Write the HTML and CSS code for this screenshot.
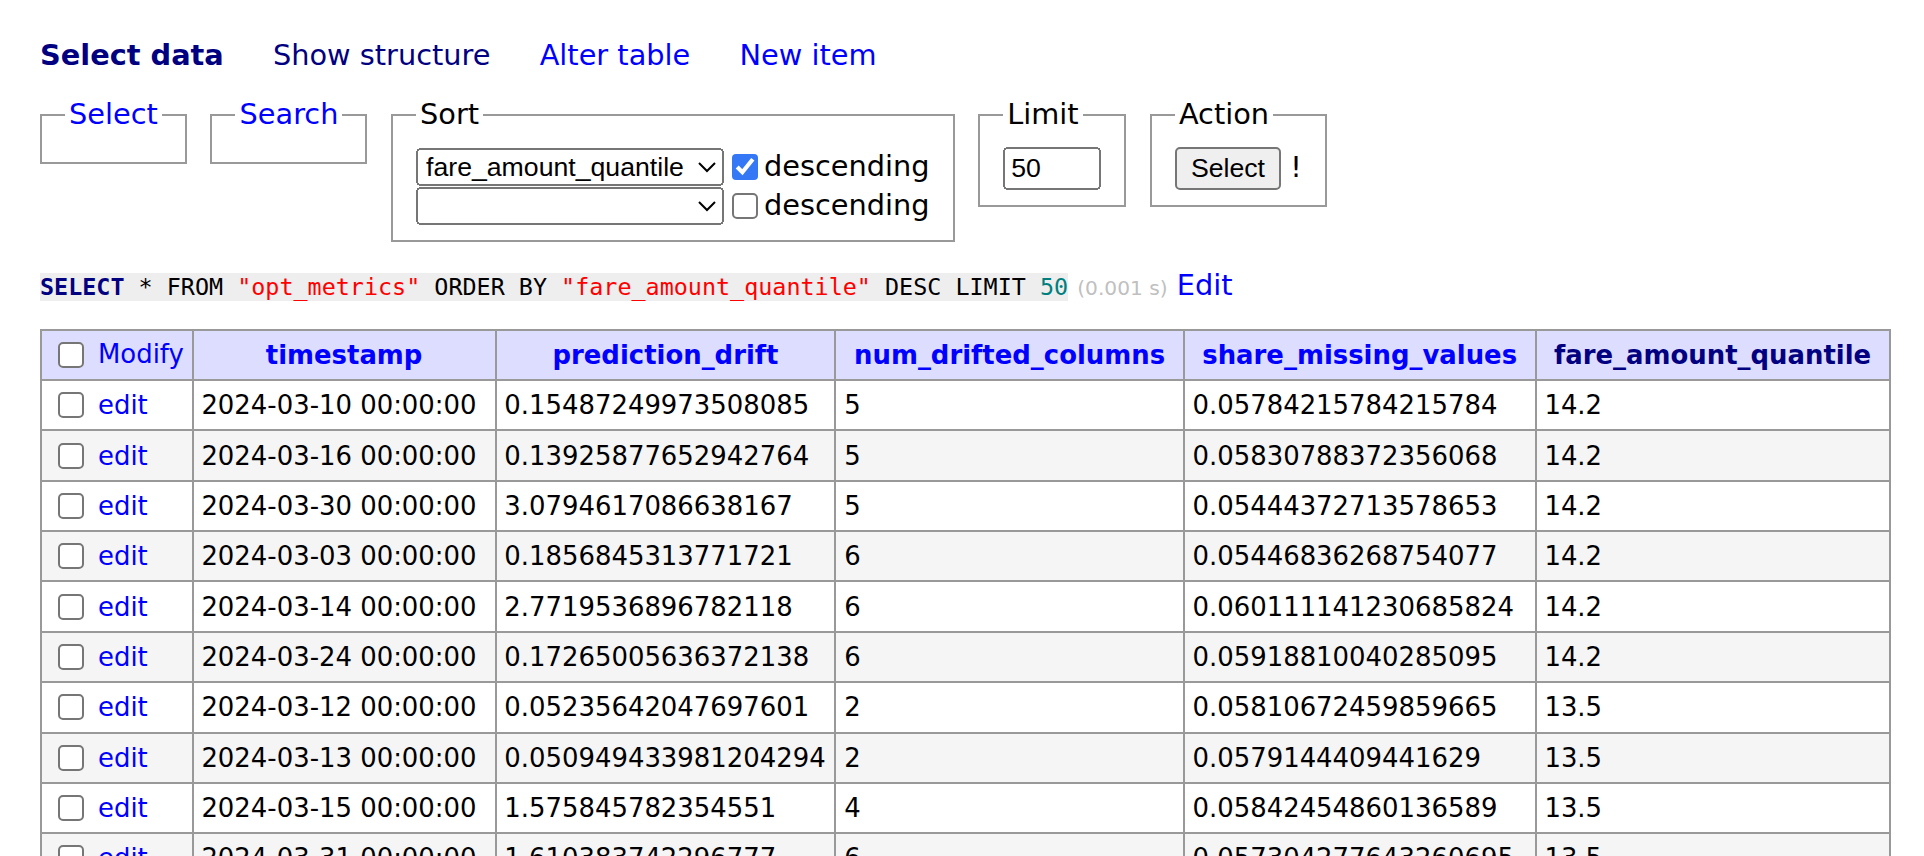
FILE: index.html
```html
<!DOCTYPE html>
<html lang="en">
<head>
<meta charset="utf-8">
<title>Select: opt_metrics - Adminer</title>
<link rel="stylesheet" href="styles.css">
</head>
<body>
<div class="content">
<p class="links"><a href="#select-data" class="active visited">Select data</a> <a href="#show-structure" class="visited">Show structure</a> <a href="#alter-table">Alter table</a> <a href="#new-item">New item</a></p>
<form class="form" action="#">
<fieldset class="box"><legend class="legend"><a href="#fieldset-select">Select</a></legend></fieldset>
<fieldset class="box"><legend class="legend"><a href="#fieldset-search">Search</a></legend></fieldset>
<fieldset class="box"><legend class="legend">Sort</legend>
<div class="sort-row"><select class="sort-select"><option>fare_amount_quantile</option><option></option></select><label class="desc"><input type="checkbox" class="check" checked>descending</label></div>
<div class="sort-row"><select class="sort-select"><option></option><option>fare_amount_quantile</option></select><label class="desc"><input type="checkbox" class="check">descending</label></div>
</fieldset>
<fieldset class="box"><legend class="legend">Limit</legend><div><input type="text" class="size" value="50"></div></fieldset>
<fieldset class="box"><legend class="legend">Action</legend><div><input type="submit" class="button" value="Select"> <span class="noindex" title="Full table scan">!</span></div></fieldset>
</form>
<p class="query"><code class="sql"><span class="kw">SELECT</span> * FROM <span class="str">"opt_metrics"</span> ORDER BY <span class="str">"fare_amount_quantile"</span> DESC LIMIT <span class="num">50</span></code> <span class="time">(0.001 s)</span> <a href="#edit">Edit</a></p>
<table class="data">
<thead>
<tr><td class="cell"><input type="checkbox" class="check"> <a href="#modify">Modify</a></td><th class="head w-ts"><a href="#c1">timestamp</a></th><th class="head w-pd"><a href="#c2">prediction_drift</a></th><th class="head w-nd"><a href="#c3">num_drifted_columns</a></th><th class="head w-sm"><a href="#c4">share_missing_values</a></th><th class="head w-fa"><a href="#c5" class="visited">fare_amount_quantile</a></th></tr>
</thead>
<tbody>
<tr><td class="cell"><input type="checkbox" class="check"> <a href="#e1">edit</a></td><td class="cell">2024-03-10 00:00:00</td><td class="cell">0.15487249973508085</td><td class="cell">5</td><td class="cell">0.05784215784215784</td><td class="cell">14.2</td></tr>
<tr><td class="cell"><input type="checkbox" class="check"> <a href="#e2">edit</a></td><td class="cell">2024-03-16 00:00:00</td><td class="cell">0.13925877652942764</td><td class="cell">5</td><td class="cell">0.05830788372356068</td><td class="cell">14.2</td></tr>
<tr><td class="cell"><input type="checkbox" class="check"> <a href="#e3">edit</a></td><td class="cell">2024-03-30 00:00:00</td><td class="cell">3.0794617086638167</td><td class="cell">5</td><td class="cell">0.05444372713578653</td><td class="cell">14.2</td></tr>
<tr><td class="cell"><input type="checkbox" class="check"> <a href="#e4">edit</a></td><td class="cell">2024-03-03 00:00:00</td><td class="cell">0.1856845313771721</td><td class="cell">6</td><td class="cell">0.05446836268754077</td><td class="cell">14.2</td></tr>
<tr><td class="cell"><input type="checkbox" class="check"> <a href="#e5">edit</a></td><td class="cell">2024-03-14 00:00:00</td><td class="cell">2.7719536896782118</td><td class="cell">6</td><td class="cell">0.060111141230685824</td><td class="cell">14.2</td></tr>
<tr><td class="cell"><input type="checkbox" class="check"> <a href="#e6">edit</a></td><td class="cell">2024-03-24 00:00:00</td><td class="cell">0.17265005636372138</td><td class="cell">6</td><td class="cell">0.05918810040285095</td><td class="cell">14.2</td></tr>
<tr><td class="cell"><input type="checkbox" class="check"> <a href="#e7">edit</a></td><td class="cell">2024-03-12 00:00:00</td><td class="cell">0.05235642047697601</td><td class="cell">2</td><td class="cell">0.05810672459859665</td><td class="cell">13.5</td></tr>
<tr><td class="cell"><input type="checkbox" class="check"> <a href="#e8">edit</a></td><td class="cell">2024-03-13 00:00:00</td><td class="cell">0.050949433981204294</td><td class="cell">2</td><td class="cell">0.0579144409441629</td><td class="cell">13.5</td></tr>
<tr><td class="cell"><input type="checkbox" class="check"> <a href="#e9">edit</a></td><td class="cell">2024-03-15 00:00:00</td><td class="cell">1.575845782354551</td><td class="cell">4</td><td class="cell">0.05842454860136589</td><td class="cell">13.5</td></tr>
<tr><td class="cell"><input type="checkbox" class="check"> <a href="#e10">edit</a></td><td class="cell">2024-03-31 00:00:00</td><td class="cell">1.610383742296777</td><td class="cell">6</td><td class="cell">0.057304277643260695</td><td class="cell">13.5</td></tr>
</tbody>
</table>
</div>
</body>
</html>
```
FILE: styles.css
```css
html {
  zoom: 2;
}
body {
  margin: 0;
  color: #000;
  background: #fff;
  font: 14.4px/1.25 Verdana, "DejaVu Sans", sans-serif;
}
a {
  color: blue;
  text-decoration: none;
}
a.visited {
  color: navy;
}
.content {
  padding: 0 20px;
}
.links {
  margin: 19px 0 0;
}
.links a {
  margin-right: 20px;
  white-space: nowrap;
}
.links .active {
  font-weight: bold;
}
.form {
  margin: 0;
}
.box {
  display: inline-block;
  vertical-align: top;
  padding: .5em .8em;
  margin: .8em .5em 0 0;
  border: 1px solid #999;
  min-inline-size: 0;
}
.legend {
  padding: 0 2px;
}
select, input {
  font: 13.333px "Liberation Sans", Arial, sans-serif;
}
.sort-row {
  display: flex;
  align-items: center;
  min-height: 19.5px;
}
.sort-select {
  width: 154px;
  margin: 0;
}
.desc {
  display: inline-flex;
  align-items: center;
}
.check {
  accent-color: #3478f6;
}
.size {
  width: 41px;
}
.query {
  margin: 13px 20px 0 0;
}
.sql {
  font: 11.7px "DejaVu Sans Mono", monospace;
  background: #eee;
}
.kw {
  color: navy;
  font-weight: bold;
}
.str {
  color: red;
}
.num {
  color: #007f7f;
}
.time {
  color: silver;
  font-size: 70%;
}
.data {
  width: max-content;
  border-collapse: collapse;
  margin: 12.5px 0 0;
  border: 0;
  border-top: 1px solid #999;
  border-left: 1px solid #999;
  font-size: 90%;
}
.cell, .head {
  border: 0;
  border-right: 1px solid #999;
  border-bottom: 1px solid #999;
  padding: .2em .3em;
  white-space: nowrap;
  line-height: 19px;
}
thead .cell, thead .head {
  line-height: 18.4px;
}
.cell .check {
  vertical-align: top;
}
.head {
  text-align: center;
  padding: .2em .5em;
}
.w-ts {
  width: 137.5px;
}
.w-pd {
  width: 156px;
}
.w-nd {
  width: 160.2px;
}
.w-sm {
  width: 162px;
}
.w-fa {
  width: 163px;
}
thead .cell, thead .head {
  background: #ddf;
}
tbody tr:nth-child(2n) {
  background: #f5f5f5;
}
```
